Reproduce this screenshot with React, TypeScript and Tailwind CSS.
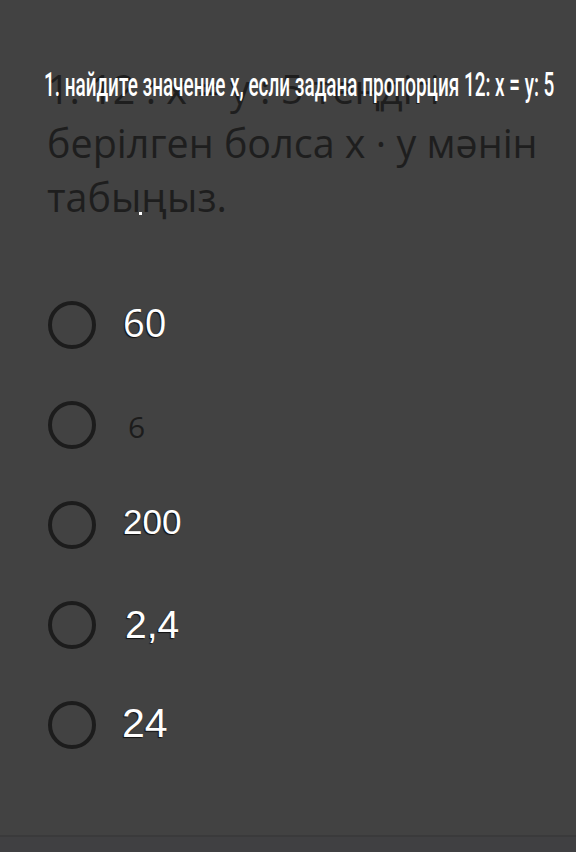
const options = [
  { label: '60', cls: 'ml-[27px] text-[38px] text-white font-["Open_Sans",sans-serif] font-medium [text-shadow:-1px_1px_1px_#111] -mt-[6px]' },
  { label: '6', cls: 'ml-[32px] text-[30px] text-[#1c1c1c] font-["Open_Sans",sans-serif] mt-[2px]' },
  { label: '200', cls: 'ml-[27px] text-[35px] text-white font-["Liberation_Sans",Arial,sans-serif] [text-shadow:-1px_1px_1px_#111] -mt-[5px]' },
  { label: '2,4', cls: 'ml-[29px] text-[39px] text-white font-["Liberation_Sans",Arial,sans-serif] [text-shadow:-1px_1px_1px_#111]' },
  { label: '24', cls: 'ml-[26px] text-[41px] text-white font-["Liberation_Sans",Arial,sans-serif] [text-shadow:-1px_1px_1px_#111] -mt-[3px]' },
]

export default function App() {
  return (
    <div className="relative flex min-h-[852px] w-[576px] flex-col overflow-hidden bg-[#424242]">
      <div className="flex-1">
        <p className="pl-[47px] pt-[62px] font-['Open_Sans',sans-serif] text-[39.5px] leading-[54px] text-[#1e1e1e]">
          <span className="block whitespace-nowrap">1. 12 : x = y : 5 теңдігі</span>
          <span className="block whitespace-nowrap">берілген болса x · y мәнін</span>
          <span className="block whitespace-nowrap">табыңыз.</span>
        </p>

        <div className="mt-[51px] flex flex-col">
          {options.map((o) => (
            <div key={o.label} className="flex h-[100px] items-center pl-[48px]">
              <span className="h-[48px] w-[48px] shrink-0 rounded-full border-[4px] border-[#1c1c1c]" />
              <span className={o.cls}>{o.label}</span>
            </div>
          ))}
        </div>
      </div>

      <div className="h-[17px] border-t-2 border-[#3a3a3b] bg-[#404042]" />

      {/* pasted-over translation */}
      <div className="absolute left-[44px] top-[68px] origin-left scale-x-[0.573] whitespace-nowrap font-['Roboto',sans-serif] text-[33px] font-medium leading-none text-white">
        1. найдите значение х, если задана пропорция 12: х = у: 5
      </div>
      <span className="absolute left-[139px] top-[212px] h-[3px] w-[3px] bg-white" />
    </div>
  )
}
